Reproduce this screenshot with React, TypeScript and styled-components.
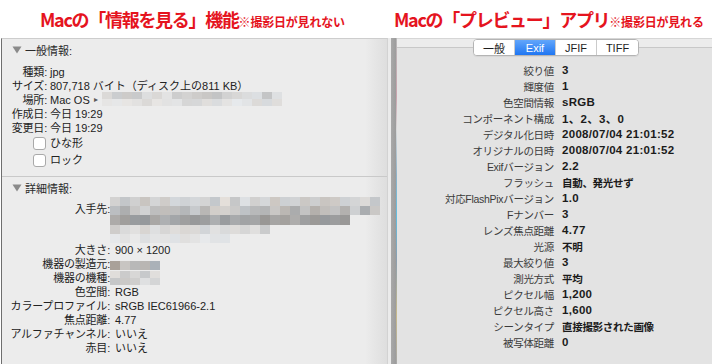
import React from "react";
import styled, { createGlobalStyle } from "styled-components";

const GlobalStyle = createGlobalStyle`
  html, body { margin: 0; padding: 0; background: #ffffff; }
  body { font-family: "Liberation Sans", "Noto Sans CJK JP", sans-serif; }
  * { box-sizing: border-box; }
`;

const Page = styled.div`
  width: 712px;
  height: 364px;
  overflow: hidden;
  display: flex;
  flex-direction: column;
  background: #ffffff;
`;

const Header = styled.header`
  height: 38px;
  flex-shrink: 0;
  display: grid;
  grid-template-columns: 394px 1fr;
`;

const Title = styled.div<{ $indent: number }>`
  padding-left: ${(p) => p.$indent}px;
  padding-top: 8px;
  display: flex;
  align-items: baseline;
  font-family: "Noto Sans CJK JP", sans-serif;
  font-weight: 700;
  color: #e5141e;
  white-space: nowrap;
`;

const TitleMain = styled.span`
  font-size: 18px;
  line-height: 22px;
  letter-spacing: -1.3px;
`;

const TitleNote = styled.span`
  font-size: 12px;
  line-height: 22px;
  letter-spacing: -0.2px;
`;

const Main = styled.main`
  flex: 1;
  min-height: 0;
  display: flex;
`;

const InfoPanel = styled.section`
  width: 387px;
  margin-left: 1px;
  border-left: 1px solid #6e6e6e;
  border-top: 1px solid #cdcdcd;
  border-right: 1px solid #d2d2d2;
  background: linear-gradient(to right, #ececec 0, #ececec calc(100% - 22px), #dedede 100%);
  padding-top: 3px;
  display: flex;
  flex-direction: column;
  color: #222222;
  font-size: 11px;
`;

const Gutter = styled.div`
  width: 3px;
  background: #ebebeb;
`;

const SplitBar = styled.div`
  width: 5px;
  background: linear-gradient(to right, #a9a9a9, #9c9c9c);
`;

const PhotoEdge = styled.div`
  width: 1px;
  background: linear-gradient(
    to bottom,
    #b9b9b9 0,
    #c9a3ad 18%,
    #d8d8d8 28%,
    #8fb3c9 42%,
    #61bde0 55%,
    #8c9fb0 68%,
    #c8b98a 85%,
    #a8a8a8 100%
  );
`;

const SectionHead = styled.div<{ $top?: number }>`
  height: 16px;
  margin-top: ${(p) => p.$top ?? 0}px;
  display: flex;
  align-items: center;
  gap: 3px;
  padding-left: 10px;
  color: #2a2a2a;
  white-space: nowrap;
`;

const Section = styled.div<{ $label: number; $gap: number; $top: number }>`
  --label-w: ${(p) => p.$label}px;
  --col-gap: ${(p) => p.$gap}px;
  margin-top: ${(p) => p.$top}px;
  display: flex;
  flex-direction: column;
`;

const Field = styled.div<{ $h?: number }>`
  height: ${(p) => p.$h ?? 14}px;
  display: grid;
  grid-template-columns: var(--label-w) 1fr;
  column-gap: var(--col-gap);
  align-items: start;
`;

const FieldLabel = styled.div<{ $pad?: number }>`
  text-align: right;
  white-space: nowrap;
  line-height: 14px;
  letter-spacing: -0.2px;
  padding-top: ${(p) => p.$pad ?? 0}px;
`;

const FieldValue = styled.div`
  white-space: nowrap;
  line-height: 14px;
  display: flex;
  align-items: center;
  gap: 4px;
`;

const CheckCell = styled.div`
  display: flex;
  justify-content: flex-end;
  align-items: center;
  height: 17px;
  padding-right: 1px;
`;

const CheckBox = styled.span`
  width: 13px;
  height: 13px;
  border: 1px solid #a9a9a9;
  border-radius: 3px;
  background: #ffffff;
`;

const CheckLabel = styled.div`
  line-height: 17px;
  white-space: nowrap;
`;

const Divider = styled.hr<{ $top: number }>`
  margin: ${(p) => p.$top}px 0 0 0;
  border: 0;
  height: 1px;
  background: #c9c9c9;
`;

const Arrow = styled.span`
  font-size: 8px;
  color: #5a5a5a;
`;

const MosaicSvg = styled.svg<{ $shift?: number; $lift?: number }>`
  display: block;
  margin-left: ${(p) => p.$shift ?? 0}px;
  margin-top: ${(p) => p.$lift ?? 0}px;
  flex-shrink: 0;
`;

const PreviewPanel = styled.section`
  flex: 1;
  display: flex;
  flex-direction: column;
  background: #e3e3e3;
  border-top: 1px solid #d6d6d6;
`;

const TabStrip = styled.div`
  height: 18px;
  flex-shrink: 0;
  display: flex;
  justify-content: center;
  padding-left: 3px;
  background: linear-gradient(
    to bottom,
    #ececec 0,
    #ececec 8px,
    #c8c8c8 8px,
    #c8c8c8 9px,
    #e3e3e3 9px
  );
`;

const Segmented = styled.div`
  display: flex;
  height: 17px;
  border: 1px solid #b4b4b4;
  border-radius: 4px;
  overflow: hidden;
  background: #ffffff;
  box-shadow: 0 1px 1px rgba(0, 0, 0, 0.06);
`;

const Segment = styled.div<{ $active?: boolean; $w: number }>`
  width: ${(p) => p.$w}px;
  display: flex;
  align-items: center;
  justify-content: center;
  font-size: 11px;
  color: ${(p) => (p.$active ? "#ffffff" : "#1e1e1e")};
  background: ${(p) => (p.$active ? "linear-gradient(to bottom, #62a6fb, #1f76f2)" : "#ffffff")};
  & + & {
    border-left: 1px solid #cbcbcb;
  }
`;

const ExifList = styled.div`
  padding-top: 5px;
  display: grid;
  grid-template-columns: 157px 1fr;
  column-gap: 8px;
  grid-auto-rows: 16px;
  align-items: center;
`;

const ExifLabel = styled.div`
  text-align: right;
  font-size: 10.5px;
  letter-spacing: -0.3px;
  color: #3b3b3b;
  white-space: nowrap;
`;

const ExifValue = styled.div<{ $cjk?: boolean }>`
  font-weight: 700;
  font-size: ${(p) => (p.$cjk ? "10.5px" : "11.5px")};
  letter-spacing: ${(p) => (p.$cjk ? "-0.3px" : "0.3px")};
  color: #1b1b1b;
  white-space: nowrap;
`;

type MosaicRow = { base: number; spread: number; from?: number; to?: number; tint?: number };

const seeded = (seed: number) => {
  let s = seed;
  return () => {
    s = (s * 9301 + 49297) % 233280;
    return s / 233280;
  };
};

const Mosaic = ({
  cols,
  cw,
  ch,
  rows,
  seed,
  shift,
  lift,
}: {
  cols: number;
  cw: number;
  ch: number;
  rows: MosaicRow[];
  seed: number;
  shift?: number;
  lift?: number;
}) => {
  const r = seeded(seed);
  const cells: React.ReactNode[] = [];
  rows.forEach((row, ri) => {
    for (let c = 0; c < cols; c++) {
      const v = Math.round(row.base + (r() - 0.5) * row.spread);
      const t = Math.round((r() - 0.5) * (row.tint ?? 6));
      if (c < (row.from ?? 0) || c >= (row.to ?? cols)) continue;
      cells.push(
        <rect
          key={`${ri}-${c}`}
          x={c * cw}
          y={ri * ch}
          width={cw}
          height={ch}
          fill={`rgb(${v + t},${v},${v - t})`}
        />
      );
    }
  });
  return (
    <MosaicSvg
      $shift={shift}
      $lift={lift}
      width={cols * cw}
      height={rows.length * ch}
      viewBox={`0 0 ${cols * cw} ${rows.length * ch}`}
      shapeRendering="crispEdges"
    >
      {cells}
    </MosaicSvg>
  );
};

const Triangle = () => (
  <svg width="10" height="8" viewBox="0 0 10 8">
    <path d="M0.5 0.5 H9.5 L5 7.5 Z" fill="#8a8a8a" />
  </svg>
);

const exifRows: { label: string; value: string; cjk?: boolean }[] = [
  { label: "絞り値", value: "3" },
  { label: "輝度値", value: "1" },
  { label: "色空間情報", value: "sRGB" },
  { label: "コンポーネント構成", value: "1、2、3、0" },
  { label: "デジタル化日時", value: "2008/07/04 21:01:52" },
  { label: "オリジナルの日時", value: "2008/07/04 21:01:52" },
  { label: "Exifバージョン", value: "2.2" },
  { label: "フラッシュ", value: "自動、発光せず", cjk: true },
  { label: "対応FlashPixバージョン", value: "1.0" },
  { label: "Fナンバー", value: "3" },
  { label: "レンズ焦点距離", value: "4.77" },
  { label: "光源", value: "不明", cjk: true },
  { label: "最大絞り値", value: "3" },
  { label: "測光方式", value: "平均", cjk: true },
  { label: "ピクセル幅", value: "1,200" },
  { label: "ピクセル高さ", value: "1,600" },
  { label: "シーンタイプ", value: "直接撮影された画像", cjk: true },
  { label: "被写体距離", value: "0" },
];

const tabs = [
  { label: "一般", w: 40 },
  { label: "Exif", w: 41, active: true },
  { label: "JFIF", w: 41 },
  { label: "TIFF", w: 42 },
];

export default function App() {
  return (
    <>
      <GlobalStyle />
      <Page>
        <Header>
          <Title $indent={40}>
            <TitleMain>Macの「情報を見る」機能</TitleMain>
            <TitleNote>※撮影日が見れない</TitleNote>
          </Title>
          <Title $indent={0}>
            <TitleMain>Macの「プレビュー」アプリ</TitleMain>
            <TitleNote>※撮影日が見れる</TitleNote>
          </Title>
        </Header>
        <Main>
          <InfoPanel>
            <SectionHead>
              <Triangle />
              <span>一般情報:</span>
            </SectionHead>
            <Section $label={45} $gap={3} $top={7}>
              <Field>
                <FieldLabel>種類:</FieldLabel>
                <FieldValue>jpg</FieldValue>
              </Field>
              <Field>
                <FieldLabel>サイズ:</FieldLabel>
                <FieldValue>807,718 バイト（ディスク上の811 KB）</FieldValue>
              </Field>
              <Field>
                <FieldLabel>場所:</FieldLabel>
                <FieldValue>
                  <span>Mac OS</span>
                  <Arrow>▸</Arrow>
                  <Mosaic
                    cols={18}
                    cw={10}
                    ch={7}
                    seed={11}
                    lift={-3}
                    rows={[
                      { base: 212, spread: 34 },
                      { base: 222, spread: 26 },
                    ]}
                  />
                </FieldValue>
              </Field>
              <Field>
                <FieldLabel>作成日:</FieldLabel>
                <FieldValue>今日 19:29</FieldValue>
              </Field>
              <Field>
                <FieldLabel>変更日:</FieldLabel>
                <FieldValue>今日 19:29</FieldValue>
              </Field>
              <Field $h={17}>
                <CheckCell>
                  <CheckBox />
                </CheckCell>
                <CheckLabel>ひな形</CheckLabel>
              </Field>
              <Field $h={17}>
                <CheckCell>
                  <CheckBox />
                </CheckCell>
                <CheckLabel>ロック</CheckLabel>
              </Field>
            </Section>
            <Divider $top={7} />
            <SectionHead $top={3}>
              <Triangle />
              <span>詳細情報:</span>
            </SectionHead>
            <Section $label={108} $gap={5} $top={1}>
              <Field $h={46}>
                <FieldLabel $pad={5}>入手先:</FieldLabel>
                <FieldValue>
                  <Mosaic
                    cols={27}
                    cw={10}
                    ch={9.2}
                    seed={7}
                    shift={-5}
                    rows={[
                      { base: 210, spread: 30, tint: 10 },
                      { base: 192, spread: 40, tint: 8 },
                      { base: 166, spread: 30, to: 24 },
                      { base: 214, spread: 24, to: 16 },
                      { base: 228, spread: 12, to: 12 },
                    ]}
                  />
                </FieldValue>
              </Field>
              <Field>
                <FieldLabel>大きさ:</FieldLabel>
                <FieldValue>900 × 1200</FieldValue>
              </Field>
              <Field>
                <FieldLabel>機器の製造元:</FieldLabel>
                <FieldValue>
                  <Mosaic
                    cols={5}
                    cw={10}
                    ch={9}
                    seed={23}
                    shift={-5}
                    lift={4}
                    rows={[{ base: 180, spread: 50, tint: 18 }]}
                  />
                </FieldValue>
              </Field>
              <Field>
                <FieldLabel>機器の機種:</FieldLabel>
                <FieldValue>
                  <Mosaic
                    cols={5}
                    cw={10}
                    ch={7}
                    seed={41}
                    shift={-5}
                    rows={[
                      { base: 212, spread: 26 },
                      { base: 214, spread: 40 },
                    ]}
                  />
                </FieldValue>
              </Field>
              <Field>
                <FieldLabel>色空間:</FieldLabel>
                <FieldValue>RGB</FieldValue>
              </Field>
              <Field>
                <FieldLabel>カラープロファイル:</FieldLabel>
                <FieldValue>sRGB IEC61966-2.1</FieldValue>
              </Field>
              <Field>
                <FieldLabel>焦点距離:</FieldLabel>
                <FieldValue>4.77</FieldValue>
              </Field>
              <Field>
                <FieldLabel>アルファチャンネル:</FieldLabel>
                <FieldValue>いいえ</FieldValue>
              </Field>
              <Field>
                <FieldLabel>赤目:</FieldLabel>
                <FieldValue>いいえ</FieldValue>
              </Field>
            </Section>
          </InfoPanel>
          <Gutter />
          <SplitBar />
          <PhotoEdge />
          <PreviewPanel>
            <TabStrip>
              <Segmented>
                {tabs.map((t) => (
                  <Segment key={t.label} $w={t.w} $active={t.active}>
                    {t.label}
                  </Segment>
                ))}
              </Segmented>
            </TabStrip>
            <ExifList>
              {exifRows.map((row) => (
                <React.Fragment key={row.label}>
                  <ExifLabel>{row.label}</ExifLabel>
                  <ExifValue $cjk={row.cjk}>{row.value}</ExifValue>
                </React.Fragment>
              ))}
            </ExifList>
          </PreviewPanel>
        </Main>
      </Page>
    </>
  );
}
